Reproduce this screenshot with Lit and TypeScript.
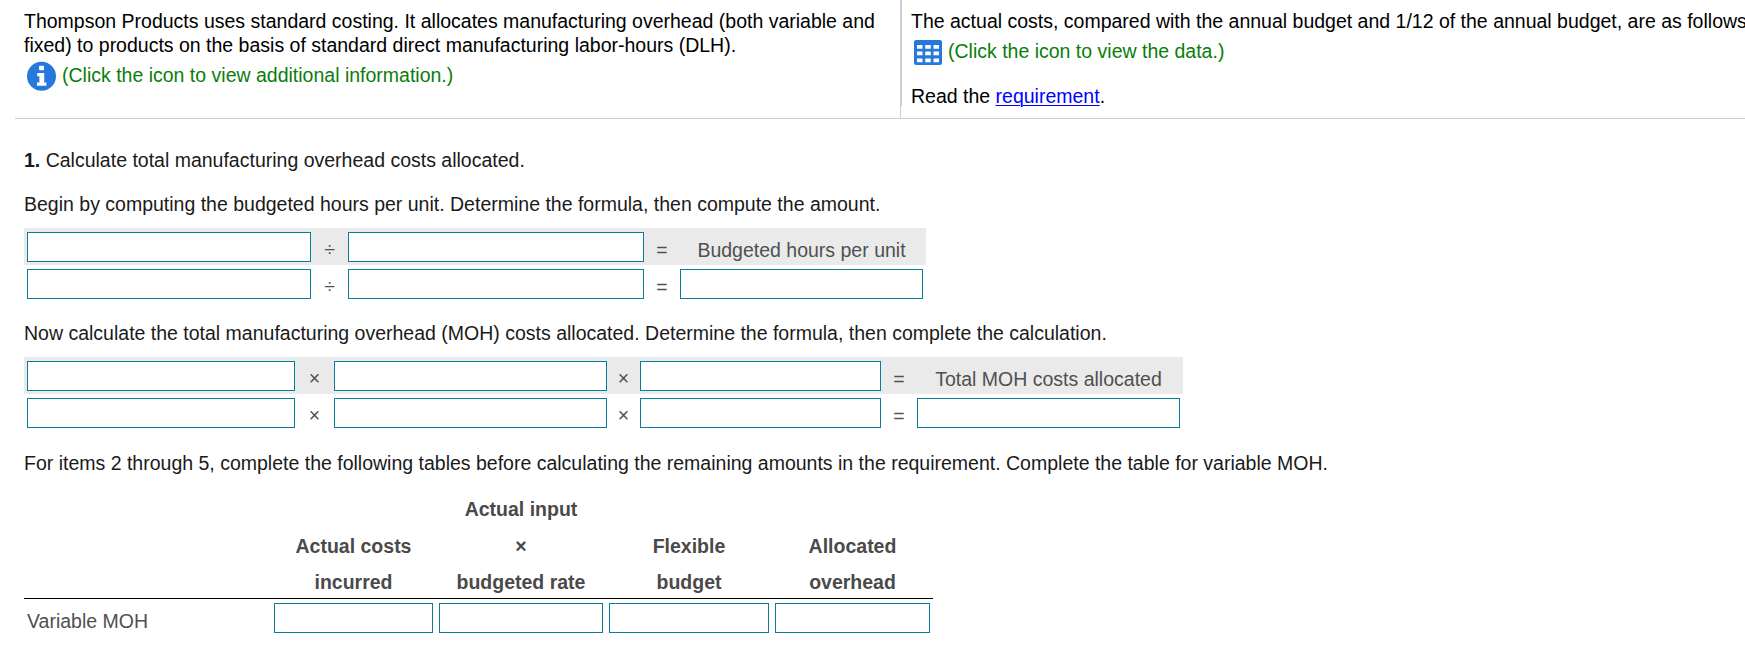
import { LitElement, html, css } from "lit";
import { customElement } from "lit/decorators.js";

const box = html`<div class="cell"><div class="box"></div></div>`;
const text = (t: string) => html`<div class="cell txt ${t === "×" || t === "÷" ? "op" : ""}">${t}</div>`;

/** Alternates answer boxes with operators; the header row ends in a label. */
const formula = (ops: string[], label: string) => html`
  <div class="line shaded">${ops.map((o) => html`${box}${text(o)}`)}${text(label)}</div>
  <div class="line">${ops.map((o) => html`${box}${text(o)}`)}${box}</div>
`;

@customElement("app-root")
export class AppRoot extends LitElement {
  static styles = css`
    :host {
      display: block;
      width: 1745px;
      height: 654px;
      overflow: hidden;
      background: #fff;
      color: #000;
      font: 19.5px/24px "Liberation Sans", Arial, sans-serif;
      white-space: nowrap;
    }
    * { box-sizing: border-box; }
    svg { display: block; flex: none; }
    p { margin: 0; }
    .intro {
      display: grid;
      grid-template-columns: 885px 845px;
      height: 119px;
      margin-left: 15px;
      border-bottom: 1px solid #c7ceda;
    }
    .left { padding: 9px 0 0 9px; }
    .right { border-left: 1px solid #c7ceda; }
    .pane { height: 106px; padding: 9px 0 0 9px; border-left: 1px solid #c7ceda; }
    .link { display: flex; gap: 6px; height: 24px; margin-top: 6px; color: #0a7d0a; }
    .link svg { margin-left: 3px; }
    .info svg { margin-top: -2px; }
    .data svg { margin-top: 1px; }
    .read { margin-top: 21px; }
    a { color: #00f; text-decoration: underline; text-decoration-thickness: 1px; text-underline-offset: 2px; }
    .body { padding-left: 24px; color: #1a1a1a; }
    .p1 { margin-top: 29px; }
    .p2 { margin-top: 20px; }
    .p3 { margin-top: 19px; }
    .p4 { margin-top: 20px; }
    .table { color: #505050; }
    .line { display: grid; }
    .t1, .t2 { margin-top: 12px; }
    .t1 { width: 902px; }
    .t1 .line { grid-template-columns: 290px 31px 302px 30px 249px; }
    .t2 { width: 1159px; }
    .t2 .line { grid-template-columns: 274px 33px 279px 27px 247px 30px 269px; }
    .shaded { background: #eaeaea; }
    .cell { height: 37px; padding: 4px 3px 3px; }
    .txt { padding: 10px 0 0; text-align: center; }
    .op { padding-top: 9px; }
    .box { height: 30px; border: 1px solid #087e9f; background: #fff; }
    .t3 { width: 909px; margin-top: 16px; }
    .t3 .line { grid-template-columns: 247px 165px 170px 166px 161px; }
    .t3 .head {
      align-items: end;
      height: 108px;
      border-bottom: 1px solid #000;
      color: #4a4a4a;
      font-weight: bold;
      line-height: 36.5px;
      text-align: center;
    }
    .t3 .name { padding: 10px 0 0 3px; }
  `;

  render() {
    return html`
      <div class="intro">
        <div class="left">
          <p>Thompson Products uses standard costing. It allocates manufacturing overhead (both variable and<br />fixed) to products on the basis of standard direct manufacturing labor-hours (DLH).</p>
          <div class="link info">
            <svg width="29" height="30" viewBox="0 0 29 30">
              <circle cx="14.5" cy="15.2" r="14.5" fill="#2579dc" />
              <rect x="12" y="4.8" width="5" height="4.4" rx="1" fill="#fff" />
              <path d="M10.2 12h7v9.6h2.2v3.2h-9.4v-3.2h2.4v-6.4h-2.2z" fill="#fff" />
            </svg>
            <span>(Click the icon to view additional information.)</span>
          </div>
        </div>
        <div class="right">
          <div class="pane">
            <p>The actual costs, compared with the annual budget and 1/12 of the annual budget, are as follows</p>
            <div class="link data">
              <svg width="28" height="25" viewBox="0 0 28 25">
                <rect width="28" height="25" rx="2" fill="#2579dc" />
                <path d="M3 5h5.5v3.8H3zM11.2 5h5.6v3.8h-5.6zM19.5 5H25v3.8h-5.5zM3 11.5h5.5v3.8H3zM11.2 11.5h5.6v3.8h-5.6zM19.5 11.5H25v3.8h-5.5zM3 18.5h5.5v3.8H3zM11.2 18.5h5.6v3.8h-5.6zM19.5 18.5H25v3.8h-5.5z" fill="#fff" />
              </svg>
              <span>(Click the icon to view the data.)</span>
            </div>
            <p class="read">Read the <a>requirement</a>.</p>
          </div>
        </div>
      </div>
      <div class="body">
        <p class="p1"><b>1.</b> Calculate total manufacturing overhead costs allocated.</p>
        <p class="p2">Begin by computing the budgeted hours per unit. Determine the formula, then compute the amount.</p>
        <div class="table t1">${formula(["÷", "="], "Budgeted hours per unit")}</div>
        <p class="p3">Now calculate the total manufacturing overhead (MOH) costs allocated. Determine the formula, then complete the calculation.</p>
        <div class="table t2">${formula(["×", "×", "="], "Total MOH costs allocated")}</div>
        <p class="p4">For items 2 through 5, complete the following tables before calculating the remaining amounts in the requirement. Complete the table for variable MOH.</p>
        <div class="table t3">
          <div class="line head">
            <div></div>
            <div>Actual costs<br />incurred</div>
            <div>Actual input<br />×<br />budgeted rate</div>
            <div>Flexible<br />budget</div>
            <div>Allocated<br />overhead</div>
          </div>
          <div class="line"><div class="cell name">Variable MOH</div>${box}${box}${box}${box}</div>
        </div>
      </div>
    `;
  }
}
